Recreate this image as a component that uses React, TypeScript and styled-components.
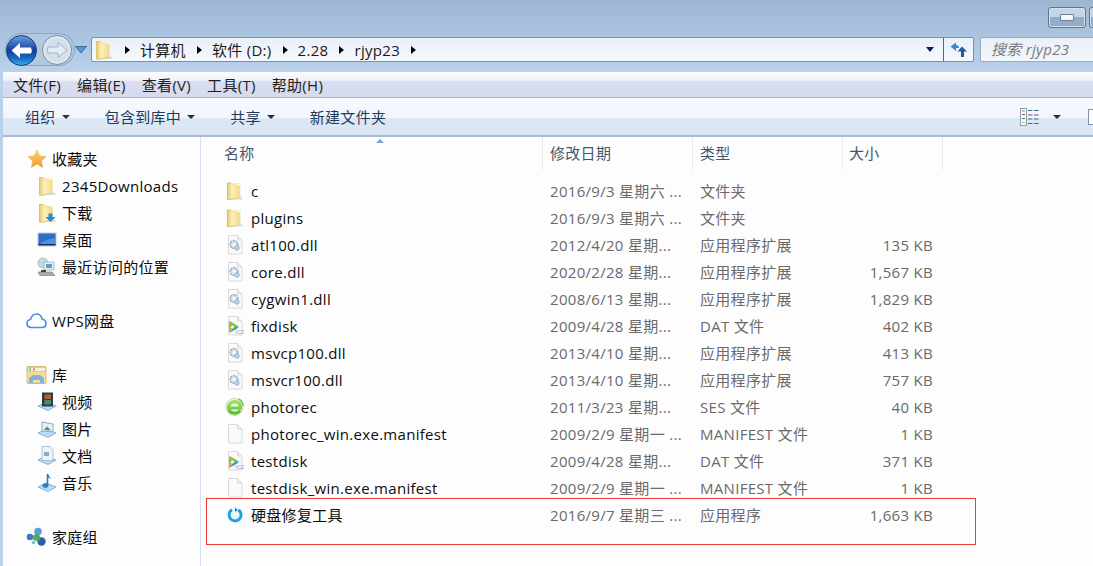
import React from 'react';
import styled, { createGlobalStyle } from 'styled-components';

const GlobalStyle = createGlobalStyle`
  html, body {
    margin: 0;
    padding: 0;
    height: 100%;
    overflow: hidden;
    background: #fdfdfe;
  }
  #root {
    height: 100%;
  }
`;

const FONT = `"Open Sans", "Noto Sans CJK SC", sans-serif`;

const Window = styled.div`
  position: relative;
  width: 1093px;
  height: 566px;
  overflow: hidden;
  display: flex;
  flex-direction: column;
  font-family: ${FONT};
  font-size: 15px;
  letter-spacing: 0.3px;
  color: #111;
  background: linear-gradient(#9db7d3, #b9d1ea 72px);
`;

const TitleBar = styled.div`
  height: 37px;
  flex: none;
  display: flex;
  justify-content: flex-end;
  align-items: flex-start;
  padding-top: 7px;
  box-sizing: border-box;
  gap: 3px;
  margin-right: -34px;
`;

const WinButton = styled.div`
  width: 38px;
  height: 21px;
  box-sizing: border-box;
  border: 1px solid #5f7691;
  border-radius: 3px;
  background: linear-gradient(#c3d5e9 0 50%, #93adc9 50% 100%);
  box-shadow: inset 0 0 0 1px #d5e2f0;
  display: flex;
  align-items: center;
  justify-content: center;
`;

const MinGlyph = styled.div`
  width: 12px;
  height: 5px;
  background: #f4f6f8;
  border: 1px solid #6d7f95;
  border-radius: 1px;
`;

const NavBar = styled.div`
  height: 35px;
  flex: none;
  display: flex;
  align-items: flex-start;
  padding-left: 6px;
`;

const NavCluster = styled.div`
  position: relative;
  width: 85px;
  height: 26px;
  flex: none;
  display: flex;
  align-items: center;

  &::before {
    content: '';
    position: absolute;
    left: -1px;
    top: -4px;
    width: 70px;
    height: 33px;
    border-radius: 17px;
    background: #b3c8df;
    box-shadow: inset 0 0 0 1px #8fa5bf;
  }

  & > svg {
    position: relative;
    flex: none;
  }
`;

const AddressBar = styled.div`
  width: 883px;
  height: 25px;
  flex: none;
  box-sizing: border-box;
  border: 1px solid #7e8fa3;
  border-radius: 2px;
  background: linear-gradient(#e9f0f8, #f6f9fd);
  display: flex;
  align-items: center;
  padding-left: 2px;
  color: #1a1a1a;
`;

const Crumb = styled.span`
  white-space: nowrap;
`;

const CrumbArrow = styled.span`
  width: 0;
  height: 0;
  border-left: 5px solid #000;
  border-top: 4px solid transparent;
  border-bottom: 4px solid transparent;
  margin: 0 10px 0 11px;
`;

const AddressEnd = styled.div`
  margin-left: auto;
  display: flex;
  align-items: center;
  height: 100%;
`;

const HistoryArrow = styled.span`
  width: 0;
  height: 0;
  border-top: 5px solid #0b1a5c;
  border-left: 4px solid transparent;
  border-right: 4px solid transparent;
  margin-right: 9px;
`;

const RefreshBox = styled.div`
  width: 29px;
  height: 100%;
  border-left: 1px solid #56657a;
  display: flex;
  align-items: center;
  justify-content: center;
`;

const SearchBox = styled.div`
  width: 130px;
  height: 25px;
  flex: none;
  box-sizing: border-box;
  margin-left: 6px;
  border: 1px solid #98abc0;
  border-radius: 2px;
  background: linear-gradient(#e9f0f8, #f3f7fc);
  padding-left: 10px;
  line-height: 22px;
  font-style: italic;
  color: #7b7b7b;
  white-space: nowrap;
`;

const Inner = styled.div`
  flex: 1;
  min-height: 0;
  display: flex;
  flex-direction: column;
  margin-left: 3px;
  background: #fdfdfe;
`;

const MenuBar = styled.div`
  height: 26px;
  flex: none;
  box-sizing: border-box;
  border-bottom: 1px solid #a9b6ca;
  background: linear-gradient(#fbfcfe, #f0f3fa 8px, #d8deef 10px, #d5dbed);
  display: flex;
  align-items: center;
  padding-left: 10px;
  gap: 16px;
  color: #1e1e1e;
`;

const MenuItem = styled.span``;

const Toolbar = styled.div`
  height: 39px;
  flex: none;
  box-sizing: border-box;
  border-bottom: 2px solid #a9bad4;
  background: linear-gradient(#f7fafe, #f1f6fd 53%, #dce7f5 54%, #dce7f5);
  display: flex;
  align-items: center;
  padding-left: 22px;
  color: #1f3b5c;
`;

const ToolItem = styled.span`
  display: flex;
  align-items: center;
  margin-right: ${(p: { $gap: number }) => p.$gap}px;
  white-space: nowrap;
`;

const Caret = styled.span<{ $offset?: number }>`
  width: 0;
  height: 0;
  border-top: 4px solid #1f3353;
  border-left: 4px solid transparent;
  border-right: 4px solid transparent;
  margin-left: ${(p) => p.$offset ?? 6}px;
`;

const ToolRight = styled.div`
  margin-left: auto;
  display: flex;
  align-items: center;
`;

const PaneIcon = styled.div`
  width: 20px;
  height: 16px;
  box-sizing: border-box;
  margin-left: 27px;
  margin-right: -15px;
  border: 1px solid #7f93ad;
  background: #fff;
`;

const Body = styled.div`
  flex: 1;
  min-height: 0;
  display: flex;
`;

const Sidebar = styled.div`
  width: 198px;
  flex: none;
  box-sizing: border-box;
  border-right: 1px solid #d3e2f3;
  padding-top: 8px;
`;

const NavRow = styled.div<{ $indent?: boolean; $topGap?: boolean }>`
  height: 27px;
  display: flex;
  align-items: center;
  gap: 5px;
  padding-left: ${(p) => (p.$indent ? 33 : 23)}px;
  margin-top: ${(p) => (p.$topGap ? 27 : 0)}px;
  white-space: nowrap;
  color: #0a0a0a;
`;

const NavIconSlot = styled.span`
  width: 21px;
  height: 20px;
  flex: none;
  display: flex;
  align-items: center;
  justify-content: center;
`;

const Content = styled.div`
  flex: 1;
  min-width: 0;
`;

const HeaderRow = styled.div`
  position: relative;
  height: 33px;
  display: grid;
  grid-template-columns: 342px 150px 150px 100px;
  color: #44566d;
  margin-bottom: 7px;
`;

const HeaderCell = styled.div<{ $pad: number; $line?: boolean }>`
  height: 33px;
  box-sizing: border-box;
  padding-left: ${(p) => p.$pad}px;
  line-height: 33px;
  border-right: 1px solid ${(p) => (p.$line ? '#e3ecf6' : 'transparent')};
`;

const SortArrow = styled.span`
  position: absolute;
  left: 175px;
  top: 2px;
  width: 0;
  height: 0;
  border-bottom: 4px solid #7ea3c4;
  border-left: 4px solid transparent;
  border-right: 4px solid transparent;
`;

const FileRow = styled.div`
  height: 27px;
  display: grid;
  grid-template-columns: 341px 150px 150px 91px;
  align-items: center;
  white-space: nowrap;
`;

const NameCell = styled.div`
  display: flex;
  align-items: center;
  padding-left: 24px;
  gap: 7px;
  color: #0d0d0d;
`;

const FileIconSlot = styled.span`
  width: 19px;
  height: 20px;
  flex: none;
  display: flex;
  align-items: center;
  justify-content: center;
`;

const MetaCell = styled.div`
  padding-left: 8px;
  color: #6a6a6a;
`;

const SizeCell = styled.div`
  text-align: right;
  color: #6a6a6a;
`;

const RedFrame = styled.div`
  position: absolute;
  left: 206px;
  top: 498px;
  width: 770px;
  height: 47px;
  box-sizing: border-box;
  border: 1px solid #f03a3a;
`;

const IconDefs = () => (
  <svg width="0" height="0" style={{ position: 'absolute' }}>
    <defs>
      <linearGradient id="folderFace" x1="0" y1="0" x2="1" y2="0">
        <stop offset="0" stopColor="#e8cd7c" />
        <stop offset=".35" stopColor="#fbf0b8" />
        <stop offset="1" stopColor="#f4dd92" />
      </linearGradient>
      <linearGradient id="star" x1="0" y1="0" x2="0" y2="1">
        <stop offset="0" stopColor="#fbd36a" />
        <stop offset="1" stopColor="#ef9a2a" />
      </linearGradient>
      <linearGradient id="back" x1="0" y1="0" x2="0" y2="1">
        <stop offset="0" stopColor="#6aa0e2" />
        <stop offset=".5" stopColor="#123f9c" />
        <stop offset=".75" stopColor="#1767c4" />
        <stop offset="1" stopColor="#39b4f0" />
      </linearGradient>
      <linearGradient id="ses" x1="0" y1="0" x2="0" y2="1">
        <stop offset="0" stopColor="#a5e05c" />
        <stop offset="1" stopColor="#56c234" />
      </linearGradient>
    </defs>
  </svg>
);

const FolderIcon = ({ down }: { down?: boolean }) => (
  <svg width="20" height="20" viewBox="0 0 20 20">
    <path d="M8 19 L19 19 L16 15 L8 15Z" fill="#c9c9c9" opacity=".65" />
    <path d="M2 1 h4 l1 1 h9 v14 l-9 3.500 h-4 q-1 0 -1 -1z" fill="#e0c068" />
    <path d="M5 2 h11 v15 h-11z" fill="#fdf5d0" />
    <path d="M3 1.500 L15 5 V17 L3 19.500Z" fill="url(#folderFace)" stroke="#e0c478" strokeWidth=".5" />
    {down && <path d="M11.500 10.500 h4 v3.500 h3 l-5 5 l-5 -5 h3z" fill="#2d8ad8" />}
  </svg>
);

const DocBase = ({ children }: { children?: React.ReactNode }) => (
  <svg width="18" height="20" viewBox="0 0 18 20">
    <path d="M2.500 0.500 h9 l4.500 4.500 v14 h-13.500z" fill="#fafafa" stroke="#dadada" />
    <path d="M11.500 0.500 v4.500 h4.500" fill="#ececec" stroke="#dadada" />
    {children}
  </svg>
);

const DllIcon = () => (
  <DocBase>
    <circle cx="8" cy="9.500" r="3.800" fill="#dbe6f1" stroke="#9db3c8" strokeWidth="1.800" strokeDasharray="2 .7" />
    <circle cx="8" cy="9.500" r="1.200" fill="#fff" />
    <circle cx="11" cy="13" r="2.200" fill="#c4d2e0" stroke="#9db3c8" />
  </DocBase>
);

const VcdIcon = () => (
  <DocBase>
    <path d="M3 6.500 Q3 5 5 6 L12 10 Q13 11 12 12 L5 16 Q3 17 3 15.500Z" fill="#2e9fd8" />
    <path d="M3 6.500 Q3 5 5 6 L12 10 Q12.500 10.500 12.500 11 H3Z" fill="#8cc63f" />
    <path d="M3 11 H7 L5 16 Q3 17 3 15.500Z" fill="#f2a22b" />
    <circle cx="6.500" cy="11" r="1.500" fill="#fff" />
    <text x="9" y="18" fontSize="4.500" letterSpacing="0" fill="#9a9a9a" fontFamily="Liberation Sans">VCD</text>
  </DocBase>
);

const SesIcon = () => (
  <svg width="20" height="20" viewBox="0 0 20 20">
    <circle cx="10" cy="10" r="9" fill="#eef5e6" stroke="#bccdb0" strokeWidth=".8" />
    <path d="M3.400 11 H16.300 Q16.500 4.500 10.200 4.300 Q4.200 4.500 3.800 10.500 Q4.200 16.500 10.200 16.500 Q14 16.500 16 13.400" fill="none" stroke="url(#ses)" strokeWidth="3.300" />
    <path d="M14 1.500 Q19 3.500 19 9" fill="none" stroke="#6cc13a" strokeWidth="1.500" />
  </svg>
);

const RepairIcon = () => (
  <svg width="18" height="18" viewBox="0 0 18 18">
    <circle cx="9" cy="9" r="8.500" fill="#eef5fa" />
    <path d="M6 3.800 A6 6 0 1 0 12.500 4" fill="none" stroke="#12a5dc" strokeWidth="2.800" />
    <path d="M9 1.500 l3 3 l-3 1z" fill="#0d7fb8" />
  </svg>
);

const StarIcon = () => (
  <svg width="20" height="20" viewBox="0 0 20 20">
    <path d="M10 1 L12.700 7 L19 7.700 L14.300 12 L15.700 18.500 L10 15.200 L4.300 18.500 L5.700 12 L1 7.700 L7.300 7Z" fill="url(#star)" stroke="#e5b25a" strokeWidth=".6" />
  </svg>
);

const DesktopIcon = () => (
  <svg width="20" height="18" viewBox="0 0 20 18">
    <rect x="0.500" y="1.500" width="19" height="14" fill="#c3ccd8" />
    <rect x="1.500" y="2.500" width="17" height="11.500" fill="#2f6cc4" />
    <path d="M1.500 14 L18.500 14 L18.500 7 Q8 8 1.500 14Z" fill="#4e8fe0" />
    <rect x="1.500" y="13" width="17" height="1.500" fill="#12325f" />
  </svg>
);

const RecentIcon = () => (
  <svg width="20" height="20" viewBox="0 0 20 20">
    <circle cx="6" cy="6" r="5" fill="#c5d8dc" stroke="#8aa" strokeWidth=".6" />
    <rect x="7" y="5" width="10" height="8" fill="#e4edf3" stroke="#8a9aa8" strokeWidth=".6" />
    <rect x="9" y="7" width="6" height="4" fill="#5c9fd0" />
    <path d="M1 15 L15 15 L18 18.500 L3 18.500Z" fill="#a8adb2" stroke="#666" strokeWidth=".5" />
    <rect x="4" y="13" width="5" height="2" fill="#444" />
  </svg>
);

const CloudIcon = () => (
  <svg width="21" height="18" viewBox="0 0 21 18">
    <path d="M5.500 15.500 Q1 15.500 1 11.500 Q1 8 4.500 7.500 Q6 2 10.500 2 Q15 2 16 7 Q20 8 20 11.500 Q20 15.500 15.500 15.500Z" fill="#fff" stroke="#4a8ff0" strokeWidth="1.700" />
  </svg>
);

const LibraryIcon = () => (
  <svg width="21" height="20" viewBox="0 0 21 20">
    <rect x="1" y="1.500" width="19" height="17" rx="1" fill="#e4cb86" stroke="#c4a65a" strokeWidth=".7" />
    <rect x="2" y="3" width="17" height="3" fill="#f7f1da" />
    <rect x="3" y="3.500" width="2" height="2" fill="#6cbf55" />
    <rect x="7" y="3.500" width="2" height="2" fill="#e2705a" />
    <path d="M1.500 7 h18 v10.500 h-18z" fill="#f5dd96" />
    <path d="M3 18 v-5 l4 -3 h7 l4 3 v5 h-4 v-3 h-7 v3z" fill="#7cb6de" />
  </svg>
);

const Dock = () => (
  <path d="M1 14 L9 10 L19 14 L11 18.500Z" fill="#bcdcf2" stroke="#62a8d8" strokeWidth=".8" />
);

const VideoIcon = () => (
  <svg width="20" height="20" viewBox="0 0 20 20">
    <Dock />
    <rect x="5" y="0.500" width="11" height="14" fill="#24404c" />
    <rect x="7.500" y="2.500" width="6.500" height="4.500" fill="#b45a34" />
    <rect x="7.500" y="8" width="6.500" height="4.500" fill="#4f8a6a" />
  </svg>
);

const PictureIcon = () => (
  <svg width="20" height="20" viewBox="0 0 20 20">
    <Dock />
    <path d="M5 3 L16 5 L16 13 L5 12Z" fill="#e6eef6" stroke="#6f9cc0" strokeWidth=".8" />
    <path d="M7 11 L10 7.500 L14 11.500Z" fill="#4d8a6f" />
  </svg>
);

const DocsIcon = () => (
  <svg width="20" height="20" viewBox="0 0 20 20">
    <Dock />
    <path d="M5 0.500 h8 l3 3 v11 h-11z" fill="#eef3f8" stroke="#a0b2c4" strokeWidth=".8" />
    <rect x="7" y="6" width="5" height="4" fill="#79aed6" />
  </svg>
);

const MusicIcon = () => (
  <svg width="20" height="20" viewBox="0 0 20 20">
    <Dock />
    <path d="M10.500 1 v11" stroke="#2a7cc4" strokeWidth="1.600" fill="none" />
    <path d="M11 1 q1 3 3.500 4.500 q-1.500 -.2 -3.500 -1z" fill="#2a7cc4" />
    <ellipse cx="8.500" cy="12.500" rx="3" ry="2.300" fill="#2a7cc4" />
  </svg>
);

const HomegroupIcon = () => (
  <svg width="21" height="20" viewBox="0 0 21 20">
    <circle cx="4" cy="10" r="3.300" fill="#3e79c8" />
    <circle cx="12" cy="4.500" r="3.800" fill="#5d9be0" />
    <circle cx="15.500" cy="14.500" r="4.200" fill="#2d5fae" />
    <circle cx="10.500" cy="10.500" r="3.600" fill="#4caf50" />
    <circle cx="7.500" cy="15.500" r="1.800" fill="#8cb4e2" />
  </svg>
);

const BackIcon = () => (
  <svg width="31" height="31" viewBox="0 0 31 31">
    <circle cx="15.500" cy="15.500" r="15" fill="url(#back)" stroke="#143f80" />
    <path d="M5.500 15.500 L14 8 V12.500 H25 Q26.500 15.500 25 18.500 H14 V23Z" fill="#fff" />
  </svg>
);

const ForwardIcon = () => (
  <svg width="30" height="30" viewBox="0 0 30 30" style={{ marginLeft: 5 }}>
    <circle cx="15" cy="15" r="14.500" fill="#d3dfec" stroke="#7f8fa3" />
    <circle cx="15" cy="15" r="13" fill="none" stroke="#e9f0f7" />
    <path d="M25 15 L16 7.500 V12 H6 Q5 15 6 18 H16 V22.500Z" fill="#e3ebf3" stroke="#a4b2c3" />
  </svg>
);

const HistoryDrop = () => (
  <svg width="12" height="8" viewBox="0 0 12 8" style={{ marginLeft: 3 }}>
    <path d="M0.500 0.500 H11.500 L6 7Z" fill="#4f9bd8" stroke="#21527f" strokeWidth=".7" />
  </svg>
);

const RefreshIcon = () => (
  <svg width="18" height="16" viewBox="0 0 18 16">
    <path d="M6 0.500 L6 3 Q9 3 9 6 L6 6 L6 9 L0.500 4.500Z" fill="#3a86cf" />
    <path d="M12 4.500 L17 9.500 L14 9.500 L14 15 L11 15 L11 9.500 L7.500 9.500Z" fill="#1e5e9e" />
  </svg>
);

const ViewsIcon = () => (
  <svg width="20" height="18" viewBox="0 0 20 18">
    <rect x="0.500" y="0.500" width="6" height="17" fill="#fff" stroke="#8b9db3" />
    <path d="M2 3 h3" stroke="#6cbf55" strokeWidth="1.200" />
    <path d="M2 6.500 h3" stroke="#e2483a" strokeWidth="1.200" />
    <path d="M2 10.500 h3" stroke="#3f8fd8" strokeWidth="1.200" />
    <path d="M2 14.500 h3" stroke="#c8c03a" strokeWidth="1.200" />
    <path d="M8 2.500 h11 M8 7 h11 M8 11 h11 M8 15.500 h11" stroke="#54647c" strokeWidth="1.200" strokeDasharray="4.500 1.500" />
  </svg>
);

const favorites = [
  { label: '2345Downloads', icon: <FolderIcon /> },
  { label: '下载', icon: <FolderIcon down /> },
  { label: '桌面', icon: <DesktopIcon /> },
  { label: '最近访问的位置', icon: <RecentIcon /> },
];

const libraries = [
  { label: '视频', icon: <VideoIcon /> },
  { label: '图片', icon: <PictureIcon /> },
  { label: '文档', icon: <DocsIcon /> },
  { label: '音乐', icon: <MusicIcon /> },
];

const files = [
  { name: 'c', date: '2016/9/3 星期六 ...', type: '文件夹', size: '', icon: <FolderIcon /> },
  { name: 'plugins', date: '2016/9/3 星期六 ...', type: '文件夹', size: '', icon: <FolderIcon /> },
  { name: 'atl100.dll', date: '2012/4/20 星期...', type: '应用程序扩展', size: '135 KB', icon: <DllIcon /> },
  { name: 'core.dll', date: '2020/2/28 星期...', type: '应用程序扩展', size: '1,567 KB', icon: <DllIcon /> },
  { name: 'cygwin1.dll', date: '2008/6/13 星期...', type: '应用程序扩展', size: '1,829 KB', icon: <DllIcon /> },
  { name: 'fixdisk', date: '2009/4/28 星期...', type: 'DAT 文件', size: '402 KB', icon: <VcdIcon /> },
  { name: 'msvcp100.dll', date: '2013/4/10 星期...', type: '应用程序扩展', size: '413 KB', icon: <DllIcon /> },
  { name: 'msvcr100.dll', date: '2013/4/10 星期...', type: '应用程序扩展', size: '757 KB', icon: <DllIcon /> },
  { name: 'photorec', date: '2011/3/23 星期...', type: 'SES 文件', size: '40 KB', icon: <SesIcon /> },
  { name: 'photorec_win.exe.manifest', date: '2009/2/9 星期一 ...', type: 'MANIFEST 文件', size: '1 KB', icon: <DocBase /> },
  { name: 'testdisk', date: '2009/4/28 星期...', type: 'DAT 文件', size: '371 KB', icon: <VcdIcon /> },
  { name: 'testdisk_win.exe.manifest', date: '2009/2/9 星期一 ...', type: 'MANIFEST 文件', size: '1 KB', icon: <DocBase /> },
  { name: '硬盘修复工具', date: '2016/9/7 星期三 ...', type: '应用程序', size: '1,663 KB', icon: <RepairIcon /> },
];

const App = () => {
  return (
    <Window>
      <GlobalStyle />
      <IconDefs />
      <TitleBar>
        <WinButton>
          <MinGlyph />
        </WinButton>
        <WinButton />
      </TitleBar>
      <NavBar>
        <NavCluster>
          <BackIcon />
          <ForwardIcon />
          <HistoryDrop />
        </NavCluster>
        <AddressBar>
          <FolderIcon />
          <CrumbArrow />
          <Crumb>计算机</Crumb>
          <CrumbArrow />
          <Crumb>软件 (D:)</Crumb>
          <CrumbArrow />
          <Crumb>2.28</Crumb>
          <CrumbArrow />
          <Crumb>rjyp23</Crumb>
          <CrumbArrow />
          <AddressEnd>
            <HistoryArrow />
            <RefreshBox>
              <RefreshIcon />
            </RefreshBox>
          </AddressEnd>
        </AddressBar>
        <SearchBox>搜索 rjyp23</SearchBox>
      </NavBar>
      <Inner>
        <MenuBar>
          <MenuItem>文件(F)</MenuItem>
          <MenuItem>编辑(E)</MenuItem>
          <MenuItem>查看(V)</MenuItem>
          <MenuItem>工具(T)</MenuItem>
          <MenuItem>帮助(H)</MenuItem>
        </MenuBar>
        <Toolbar>
          <ToolItem $gap={35}>
            组织<Caret />
          </ToolItem>
          <ToolItem $gap={35}>
            包含到库中<Caret />
          </ToolItem>
          <ToolItem $gap={35}>
            共享<Caret />
          </ToolItem>
          <ToolItem $gap={0}>新建文件夹</ToolItem>
          <ToolRight>
            <ViewsIcon />
            <Caret $offset={13} />
            <PaneIcon />
          </ToolRight>
        </Toolbar>
        <Body>
          <Sidebar>
            <NavRow>
              <NavIconSlot>
                <StarIcon />
              </NavIconSlot>
              收藏夹
            </NavRow>
            {favorites.map((item) => (
              <NavRow $indent key={item.label}>
                <NavIconSlot>{item.icon}</NavIconSlot>
                {item.label}
              </NavRow>
            ))}
            <NavRow $topGap>
              <NavIconSlot>
                <CloudIcon />
              </NavIconSlot>
              WPS网盘
            </NavRow>
            <NavRow $topGap>
              <NavIconSlot>
                <LibraryIcon />
              </NavIconSlot>
              库
            </NavRow>
            {libraries.map((item) => (
              <NavRow $indent key={item.label}>
                <NavIconSlot>{item.icon}</NavIconSlot>
                {item.label}
              </NavRow>
            ))}
            <NavRow $topGap>
              <NavIconSlot>
                <HomegroupIcon />
              </NavIconSlot>
              家庭组
            </NavRow>
          </Sidebar>
          <Content>
            <HeaderRow>
              <SortArrow />
              <HeaderCell $pad={23} $line>
                名称
              </HeaderCell>
              <HeaderCell $pad={7} $line>
                修改日期
              </HeaderCell>
              <HeaderCell $pad={7} $line>
                类型
              </HeaderCell>
              <HeaderCell $pad={6} $line>
                大小
              </HeaderCell>
            </HeaderRow>
            {files.map((file) => (
              <FileRow key={file.name}>
                <NameCell>
                  <FileIconSlot>{file.icon}</FileIconSlot>
                  {file.name}
                </NameCell>
                <MetaCell>{file.date}</MetaCell>
                <MetaCell>{file.type}</MetaCell>
                <SizeCell>{file.size}</SizeCell>
              </FileRow>
            ))}
          </Content>
        </Body>
      </Inner>
      <RedFrame />
    </Window>
  );
};

export default App;
